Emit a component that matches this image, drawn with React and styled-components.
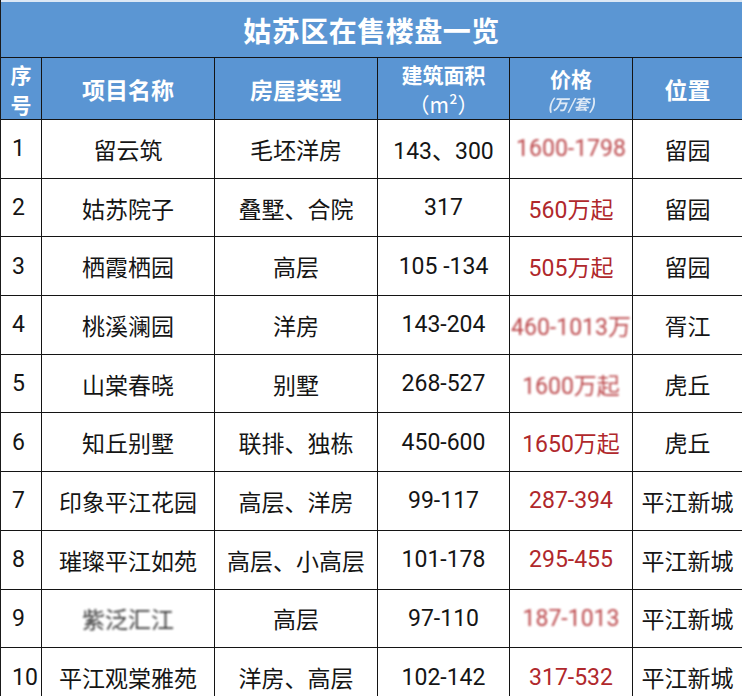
import { Fragment } from 'react';
import styled, { createGlobalStyle } from 'styled-components';

const GlobalStyle = createGlobalStyle`
  html, body {
    margin: 0;
    padding: 0;
    background: #ffffff;
  }
  body {
    font-family: Roboto, "Noto Sans CJK SC", sans-serif;
  }
`;

const cols = '41px 173px 163px 132px 123px 110px';

const Sheet = styled.div`
  width: 742px;
  height: 696px;
  overflow: hidden;
  background: #fff;
  border-left: 1.5px solid #1a1a1a;
  box-sizing: border-box;
`;

const Title = styled.div`
  height: 58px;
  background: #5b96d3;
  border-top: 2px solid #dce8f5;
  border-bottom: 1.5px solid #141414;
  box-sizing: border-box;
  display: flex;
  align-items: center;
  justify-content: center;
  color: #fff;
  font-family: "Noto Sans CJK SC", sans-serif;
  font-weight: 700;
  font-size: 28px;
  letter-spacing: 0.5px;
`;

const Grid = styled.div`
  display: grid;
  grid-template-columns: ${cols};
  grid-template-rows: 62px;
  grid-auto-rows: 58.7px;
`;

const Cell = styled.div`
  display: flex;
  flex-direction: column;
  justify-content: center;
  align-items: ${p => (p.$index ? 'flex-start' : 'center')};
  padding-left: ${p => (p.$index ? '11px' : '0')};
  border-right: 1.5px solid #141414;
  border-bottom: 1.5px solid #141414;
  box-sizing: border-box;
  white-space: nowrap;
  overflow: hidden;
  text-align: center;
  font-size: 23px;
  color: ${p => (p.$price ? '#b0282c' : '#151515')};
  font-family: Roboto, "Noto Sans CJK SC", sans-serif;
`;

const Smudge = styled.span`
  filter: blur(0.9px);
  opacity: 0.85;
`;

const HeadCell = styled(Cell)`
  background: #5a95d3;
  color: #fff;
  font-family: "Noto Sans CJK SC", sans-serif;
  font-weight: 700;
  font-size: 23px;
  align-items: center;
  padding-left: 0;
`;

const Line = styled.span`
  display: block;
  line-height: ${p => (p.$small ? '22px' : '30px')};
  font-size: ${p => (p.$small ? '15px' : '21px')};
  font-weight: ${p => (p.$light ? 400 : 700)};
  ${p => p.$small && 'filter: blur(0.6px); opacity: 0.8; font-style: italic;'}
`;

const rows = [
  ['1', '留云筑', '毛坯洋房', '143、300', '1600-1798', '留园', false, true],
  ['2', '姑苏院子', '叠墅、合院', '317', '560万起', '留园'],
  ['3', '栖霞栖园', '高层', '105 -134', '505万起', '留园'],
  ['4', '桃溪澜园', '洋房', '143-204', '460-1013万', '胥江', false, true],
  ['5', '山棠春晓', '别墅', '268-527', '1600万起', '虎丘', false, true],
  ['6', '知丘别墅', '联排、独栋', '450-600', '1650万起', '虎丘'],
  ['7', '印象平江花园', '高层、洋房', '99-117', '287-394', '平江新城'],
  ['8', '璀璨平江如苑', '高层、小高层', '101-178', '295-455', '平江新城'],
  ['9', '紫泛汇江', '高层', '97-110', '187-1013', '平江新城', true, true],
  ['10', '平江观棠雅苑', '洋房、高层', '102-142', '317-532', '平江新城'],
];

export default function App() {
  return (
    <>
      <GlobalStyle />
      <Sheet>
        <Title>姑苏区在售楼盘一览</Title>
        <Grid>
          <HeadCell>
            <Line>序</Line>
            <Line>号</Line>
          </HeadCell>
          <HeadCell>项目名称</HeadCell>
          <HeadCell>房屋类型</HeadCell>
          <HeadCell>
            <Line>建筑面积</Line>
            <Line $light>（m²）</Line>
          </HeadCell>
          <HeadCell>
            <Line>价格</Line>
            <Line $small>(万/套)</Line>
          </HeadCell>
          <HeadCell>位置</HeadCell>
          {rows.map(([no, name, type, area, price, place, nameBlur, priceBlur]) => (
            <Fragment key={no}>
              <Cell $index>{no}</Cell>
              <Cell>{nameBlur ? <Smudge>{name}</Smudge> : name}</Cell>
              <Cell>{type}</Cell>
              <Cell>{area}</Cell>
              <Cell $price>{priceBlur ? <Smudge>{price}</Smudge> : price}</Cell>
              <Cell>{place}</Cell>
            </Fragment>
          ))}
        </Grid>
      </Sheet>
    </>
  );
}
